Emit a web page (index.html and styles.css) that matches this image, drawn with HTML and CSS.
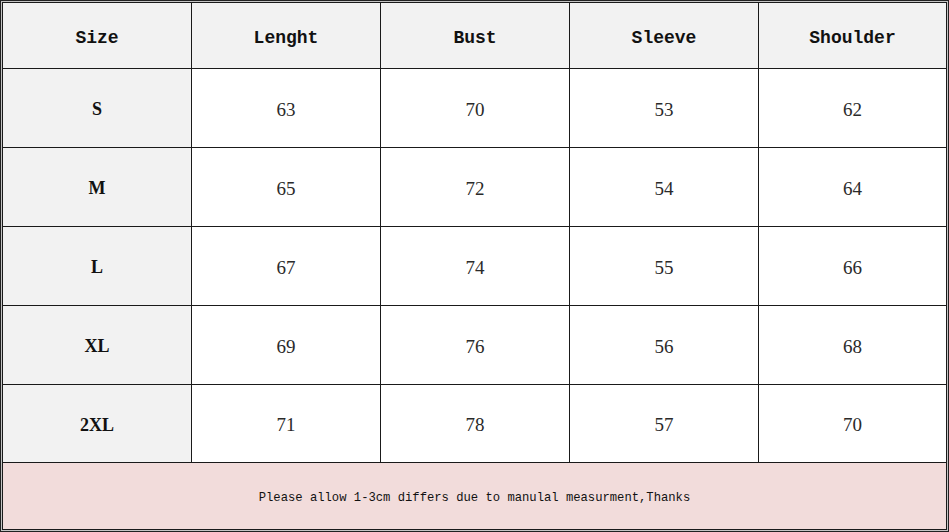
FILE: index.html
```
<!DOCTYPE html>
<html>
<head>
<meta charset="utf-8">
<link rel="stylesheet" href="styles.css">
</head>
<body>
<div class="frame">
  <div class="sheet">
    <div class="cell head">Size</div>
    <div class="cell head">Lenght</div>
    <div class="cell head">Bust</div>
    <div class="cell head">Sleeve</div>
    <div class="cell head">Shoulder</div>

    <div class="cell label">S</div>
    <div class="cell num">63</div>
    <div class="cell num">70</div>
    <div class="cell num">53</div>
    <div class="cell num">62</div>

    <div class="cell label">M</div>
    <div class="cell num">65</div>
    <div class="cell num">72</div>
    <div class="cell num">54</div>
    <div class="cell num">64</div>

    <div class="cell label">L</div>
    <div class="cell num">67</div>
    <div class="cell num">74</div>
    <div class="cell num">55</div>
    <div class="cell num">66</div>

    <div class="cell label">XL</div>
    <div class="cell num">69</div>
    <div class="cell num">76</div>
    <div class="cell num">56</div>
    <div class="cell num">68</div>

    <div class="cell label">2XL</div>
    <div class="cell num">71</div>
    <div class="cell num">78</div>
    <div class="cell num">57</div>
    <div class="cell num">70</div>

    <div class="cell note">Please allow 1-3cm differs due to manulal measurment,Thanks</div>
  </div>
</div>
</body>
</html>
```

FILE: styles.css
```
html, body {
  margin: 0;
  padding: 0;
  background: #ffffff;
}

.frame {
  width: 945px;
  border: 1px solid #222;
  padding: 1px;
  background: #c4c4c4;
}

.sheet {
  display: grid;
  grid-template-columns: 188px 188px 188px 188px 187px;
  grid-template-rows: 65px 78px 78px 78px 78px 77px 66px;
  gap: 1px;
  padding: 1px;
  background: #1a1a1a;
}

.cell {
  display: flex;
  align-items: center;
  justify-content: center;
  background: #ffffff;
  color: #111;
  box-sizing: border-box;
}

.head {
  background: #f2f2f2;
  font-family: "Liberation Mono", "DejaVu Sans Mono", monospace;
  font-weight: bold;
  font-size: 18px;
  padding-top: 4px;
}

.label {
  background: #f2f2f2;
  font-family: "Liberation Serif", "DejaVu Serif", serif;
  font-weight: bold;
  font-size: 18px;
  padding-top: 3px;
}

.num {
  font-family: "Liberation Serif", "DejaVu Serif", serif;
  font-size: 19px;
  color: #2a2a2a;
  padding-top: 3px;
}

.note {
  grid-column: 1 / -1;
  background: #f2dcdb;
  font-family: "Liberation Mono", "DejaVu Sans Mono", monospace;
  font-size: 12.2px;
  color: #111;
  padding-top: 4px;
}
```
